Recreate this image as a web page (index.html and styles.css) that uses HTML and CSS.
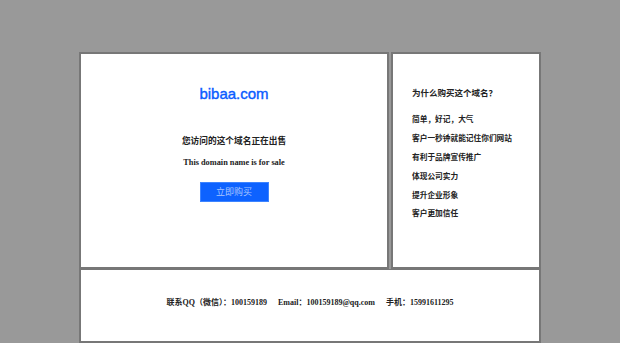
FILE: index.html
```html
<!DOCTYPE html>
<html lang="zh-CN">
<head>
    <meta charset="UTF-8">
    <meta name="viewport" content="width=device-width, initial-scale=1.0">
    <title>bibaa.com</title>
    <link rel="stylesheet" href="styles.css">
</head>
<body>
    <div class="wrap">
        <!-- Top row: domain info + reasons -->
        <div class="top">
            <div class="main">
                <h1 class="domain">bibaa.com</h1>
                <p class="sale-cn">您访问的这个域名正在出售</p>
                <p class="sale-en">This domain name is for sale</p>
                <a class="buy" href="#">立即购买</a>
            </div>

            <div class="side">
                <h2 class="side-title">为什么购买这个域名？</h2>
                <ul class="reasons">
                    <li>简单，好记，大气</li>
                    <li>客户一秒钟就能记住你们网站</li>
                    <li>有利于品牌宣传推广</li>
                    <li>体现公司实力</li>
                    <li>提升企业形象</li>
                    <li>客户更加信任</li>
                </ul>
            </div>
        </div>

        <!-- Contact footer -->
        <div class="footer">
            <span>联系QQ（微信）：100159189</span>
            <span>Email：100159189@qq.com</span>
            <span>手机：15991611295</span>
        </div>
    </div>
</body>
</html>
```

FILE: styles.css
```css
* {
    margin: 0;
    padding: 0;
    box-sizing: border-box;
}

body {
    background: #999999;
    font-family: 'Liberation Serif', 'Noto Sans CJK SC', serif;
    color: #222;
}

.wrap {
    width: 462px;
    margin: 52px auto 0;
}

/* Top row */
.top {
    display: flex;
    gap: 2px;
    height: 217px;
}

.main,
.side,
.footer {
    background: #fff;
    border: 2px solid #777;
}

.main {
    width: 310px;
    text-align: center;
    padding-top: 31px;
}

.domain {
    font-family: 'Liberation Sans', Arial, sans-serif;
    font-size: 15px;
    font-weight: normal;
    color: #0a5cff;
    line-height: 18px;
    -webkit-text-stroke: 0.4px #0a5cff;
}

.sale-cn {
    font-family: 'Noto Sans CJK SC', sans-serif;
    font-size: 8.7px;
    font-weight: bold;
    line-height: 12px;
    margin-top: 32px;
}

.sale-en {
    font-size: 8.3px;
    font-weight: bold;
    line-height: 12px;
    margin-top: 10px;
}

.buy {
    display: block;
    width: 69px;
    height: 20px;
    margin: 13px auto 0;
    background: #0d62ff;
    border: 1px solid #3d84ff;
    color: #a9c6ff;
    font-family: 'Noto Sans CJK SC', sans-serif;
    font-size: 9px;
    line-height: 18px;
    text-decoration: none;
}

/* Reasons */
.side {
    flex: 1;
    padding: 32px 0 0 19px;
    font-family: 'Noto Sans CJK SC', sans-serif;
}

.side-title {
    font-size: 8.5px;
    font-weight: bold;
    line-height: 12px;
}

.reasons {
    list-style: none;
    margin-top: 15px;
}

.reasons li {
    font-size: 7.7px;
    font-weight: bold;
    line-height: 11px;
    margin-bottom: 7.9px;
    color: #222;
}

/* Footer */
.footer {
    height: 74px;
    border-top-width: 1px;
    display: flex;
    justify-content: center;
    align-items: center;
    gap: 11px;
    padding-bottom: 8px;
    font-size: 8px;
    font-weight: bold;
}
```
